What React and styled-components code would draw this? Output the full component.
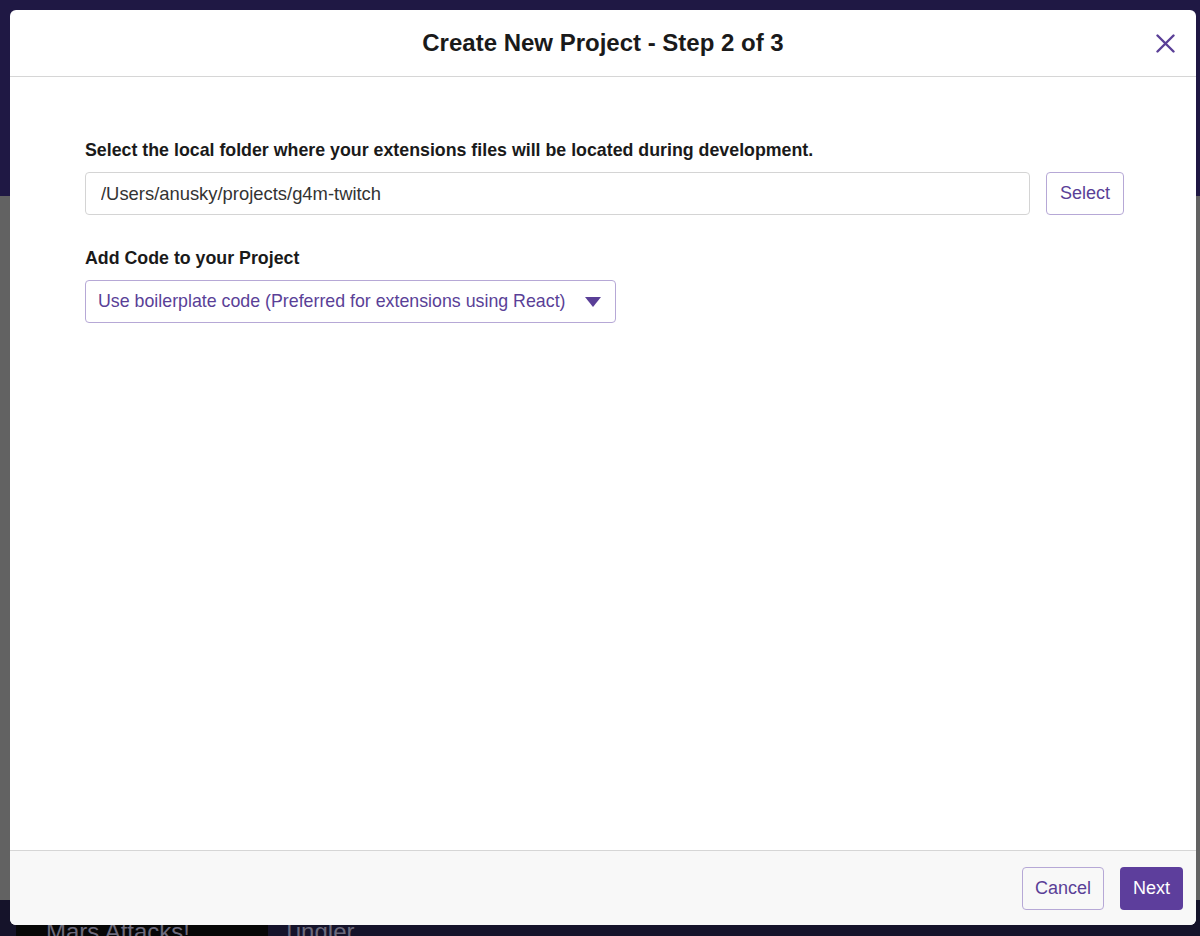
import React, { useState } from 'react';
import styled, { createGlobalStyle } from 'styled-components';

const GlobalStyle = createGlobalStyle`
  html, body {
    margin: 0;
    padding: 0;
    height: 100%;
    overflow: hidden;
  }
  body {
    font-family: "Liberation Sans", Helvetica, Arial, sans-serif;
  }
`;

const Page = styled.div`
  width: 1200px;
  height: 936px;
  display: flex;
  flex-direction: column;
  position: relative;
  overflow: hidden;
`;

const TopBand = styled.div`
  height: 196px;
  background: #1f1844;
`;

const MidBand = styled.div`
  flex: 1;
  background: #626262;
`;

const BottomBand = styled.div`
  height: 36px;
  background: #15132a;
  display: flex;
  align-items: flex-end;
`;

const Tile = styled.div`
  width: ${p => p.w}px;
  height: 100%;
  background: ${p => p.bg};
  color: #6c6a7c;
  font-size: 24px;
  padding-left: ${p => p.pl || 0}px;
  box-sizing: border-box;
  display: flex;
  align-items: flex-end;
  line-height: 1;
  margin-bottom: -8px;
`;

const Overlay = styled.div`
  position: absolute;
  top: 10px;
  left: 10px;
  width: 1186px;
  height: 915px;
  background: #fff;
  border-radius: 6px;
  display: flex;
  flex-direction: column;
  overflow: hidden;
`;

const Header = styled.div`
  height: 66px;
  border-bottom: 1px solid #d6d6d6;
  display: flex;
  align-items: center;
  justify-content: center;
  position: relative;
`;

const Title = styled.h1`
  margin: 0;
  font-size: 24px;
  font-weight: 700;
  color: #1a1a1a;
`;

const CloseButton = styled.button`
  position: absolute;
  right: 20px;
  top: 22px;
  width: 22px;
  height: 22px;
  padding: 0;
  border: none;
  background: none;
  cursor: pointer;
  display: flex;
  align-items: center;
  justify-content: center;
`;

const Body = styled.div`
  flex: 1;
  padding: 63px 72px 0 75px;
  display: flex;
  flex-direction: column;
`;

const Label = styled.label`
  display: block;
  font-size: 17.8px;
  font-weight: 700;
  color: #1a1a1a;
  margin-bottom: 11px;
`;

const Row = styled.div`
  display: flex;
  gap: 16px;
  margin-bottom: 33px;
`;

const Input = styled.input`
  flex: 1;
  height: 43px;
  box-sizing: border-box;
  border: 1px solid #d4d4d4;
  border-radius: 4px;
  padding: 0 15px;
  font-family: inherit;
  font-size: 18.4px;
  color: #333;
  outline: none;
`;

const OutlineButton = styled.button`
  height: 43px;
  box-sizing: border-box;
  padding: 0 ${p => p.px || 13}px;
  border: 1px solid #b6a8d6;
  border-radius: 4px;
  background: ${p => p.bg || '#fff'};
  color: #5a3f97;
  font-family: inherit;
  font-size: 18px;
  cursor: pointer;
`;

const PrimaryButton = styled.button`
  height: 43px;
  box-sizing: border-box;
  padding: 0 13px;
  border: none;
  border-radius: 4px;
  background: #5d3e9c;
  color: #fff;
  font-family: inherit;
  font-size: 18px;
  cursor: pointer;
`;

const SelectBox = styled.div`
  width: 531px;
  height: 43px;
  box-sizing: border-box;
  border: 1px solid #b6a8d6;
  border-radius: 4px;
  display: flex;
  align-items: center;
  justify-content: space-between;
  padding: 0 14px 0 12px;
  color: #5a3f97;
  font-size: 17.8px;
  cursor: pointer;
`;

const Footer = styled.div`
  height: 75px;
  border-top: 1px solid #d6d6d6;
  background: #f8f8f8;
  display: flex;
  align-items: center;
  justify-content: flex-end;
  gap: 16px;
  padding-right: 13px;
  box-sizing: border-box;
`;

export default function App() {
  const [folder, setFolder] = useState('/Users/anusky/projects/g4m-twitch');

  return (
    <Page>
      <GlobalStyle />
      <TopBand />
      <MidBand />
      <BottomBand>
        <Tile w={16} bg="#15132a" />
        <Tile w={252} bg="#070707" pl={30}>Mars Attacks!</Tile>
        <Tile w={300} bg="#15132a" pl={14}>Tingler</Tile>
      </BottomBand>

      <Overlay>
        <Header>
          <Title>Create New Project - Step 2 of 3</Title>
          <CloseButton aria-label="Close">
            <svg width="19" height="19" viewBox="0 0 19 19">
              <path d="M1.5 1.5 L17.5 17.5 M17.5 1.5 L1.5 17.5" stroke="#5a3f97" strokeWidth="2.4" strokeLinecap="round" />
            </svg>
          </CloseButton>
        </Header>

        <Body>
          <Label htmlFor="folder">Select the local folder where your extensions files will be located during development.</Label>
          <Row>
            <Input id="folder" value={folder} onChange={e => setFolder(e.target.value)} />
            <OutlineButton>Select</OutlineButton>
          </Row>

          <Label>Add Code to your Project</Label>
          <SelectBox>
            <span>Use boilerplate code (Preferred for extensions using React)</span>
            <svg width="16" height="10" viewBox="0 0 16 10">
              <path d="M0 0 H16 L8 10 Z" fill="#5a3f97" />
            </svg>
          </SelectBox>
        </Body>

        <Footer>
          <OutlineButton bg="#f8f8f8" px={12}>Cancel</OutlineButton>
          <PrimaryButton>Next</PrimaryButton>
        </Footer>
      </Overlay>
    </Page>
  );
}
